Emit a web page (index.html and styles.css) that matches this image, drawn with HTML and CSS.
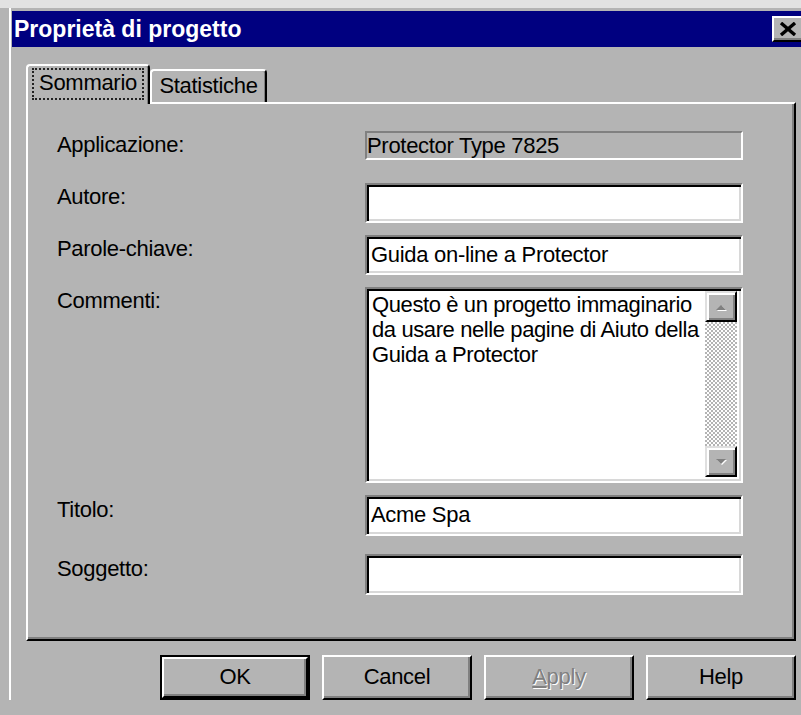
FILE: index.html
```html
<!DOCTYPE html>
<html lang="it">
<head>
<meta charset="utf-8">
<title>Proprietà di progetto</title>
<link rel="stylesheet" href="styles.css">
</head>
<body>
<div class="top-edge"></div>
<div class="window">
  <div class="titlebar">
    <span class="title">Proprietà di progetto</span>
    <div class="close" aria-label="Chiudi">
      <svg width="20" height="14" viewBox="0 0 20 14">
        <path d="M3 1 L17 13 M17 1 L3 13" stroke="#000" stroke-width="3.4" fill="none"/>
      </svg>
    </div>
  </div>

  <div class="content">
    <div class="tabs">
      <div class="tab active"><span class="focus">Sommario</span></div>
      <div class="tab">Statistiche</div>
    </div>

    <div class="panel">
      <div class="row">
        <span class="label">Applicazione:</span>
        <div class="static">Protector Type 7825</div>
      </div>
      <div class="row row-autore">
        <span class="label">Autore:</span>
        <div class="field"></div>
      </div>
      <div class="row row-gap">
        <span class="label">Parole-chiave:</span>
        <div class="field">Guida on-line a Protector</div>
      </div>
      <div class="row row-gap">
        <span class="label">Commenti:</span>
        <div class="field memo">
          <div class="memo-text">Questo è un progetto immaginario<br>da usare nelle pagine di Aiuto della<br>Guida a Protector</div>
          <div class="scrollbar">
            <div class="scroll-btn">
              <svg width="14" height="8" viewBox="0 0 14 8"><path d="M2 7 L7 2 L12 7 Z" fill="#fff" transform="translate(1 1)"/><path d="M2 7 L7 2 L12 7 Z" fill="#808080"/></svg>
            </div>
            <div class="track"></div>
            <div class="scroll-btn">
              <svg width="14" height="8" viewBox="0 0 14 8"><path d="M2 1 L7 6 L12 1 Z" fill="#fff" transform="translate(1 1)"/><path d="M2 1 L7 6 L12 1 Z" fill="#808080"/></svg>
            </div>
          </div>
        </div>
      </div>
      <div class="row row-gap">
        <span class="label label-low">Titolo:</span>
        <div class="field tall">Acme Spa</div>
      </div>
      <div class="row row-soggetto">
        <span class="label label-low">Soggetto:</span>
        <div class="field tall"></div>
      </div>
    </div>

    <div class="buttons">
      <div class="btn default"><span class="btn-face">OK</span></div>
      <div class="btn"><span class="btn-face">Cancel</span></div>
      <div class="btn"><span class="btn-face disabled"><u>A</u>pply</span></div>
      <div class="btn"><span class="btn-face">Help</span></div>
    </div>
  </div>
</div>
</body>
</html>
```

FILE: styles.css
```css
* {
  box-sizing: border-box;
}

body {
  margin: 0;
  width: 801px;
  height: 715px;
  overflow: hidden;
  background: #b4b4b4;
  font-family: "Liberation Sans", Arial, sans-serif;
  font-size: 22px;
  letter-spacing: -0.3px;
  color: #000;
}

/* light strip along the top of the window frame */
.top-edge {
  height: 8px;
  background: #e2e2e2;
}

.window {
  margin-left: 9px;
  border-left: 2px solid #fff;
  padding: 3px 0 0 1px;
  width: 820px;
}

/* caption bar */
.titlebar {
  width: 789px;
  height: 36px;
  background: #000080;
  display: flex;
  align-items: center;
  padding-left: 2px;
}

.title {
  flex: 1;
  color: #fff;
  font-weight: bold;
  font-size: 23px;
  letter-spacing: 0;
  line-height: 36px;
  white-space: nowrap;
}

.close {
  width: 29px;
  height: 26px;
  background: #b4b4b4;
  border-style: solid;
  border-width: 2px 0 2px 2px;
  border-color: #fff #000 #000 #fff;
  box-shadow: inset 0 -2px 0 #808080;
  display: flex;
  align-items: center;
  justify-content: center;
  padding-left: 1px;
}

.content {
  padding: 17px 0 0 14px;
}

/* tab strip */
.tabs {
  display: flex;
  align-items: flex-end;
  height: 40px;
  margin-bottom: -2px;
  position: relative;
  z-index: 1;
}

.tab {
  background: #b4b4b4;
  border-top: 2px solid #fff;
  border-left: 2px solid #fff;
  border-right: 2px solid #000;
  border-radius: 4px 4px 0 0;
  box-shadow: inset -1px 0 0 #808080;
  width: 117px;
  height: 33px;
  margin-bottom: 2px;
  display: flex;
  align-items: center;
  justify-content: center;
  padding-bottom: 1px;
}

.tab.active {
  width: 124px;
  height: 40px;
  margin-bottom: 0;
  padding: 2px 4px 4px 4px;
  align-items: stretch;
}

.focus {
  flex: 1;
  border: 2px dotted #222;
  display: flex;
  align-items: center;
  justify-content: center;
  padding-bottom: 2px;
}

/* property page */
.panel {
  width: 770px;
  height: 539px;
  border-style: solid;
  border-width: 2px;
  border-color: #fff #000 #000 #fff;
  box-shadow: inset -2px -2px 0 #808080;
  padding: 27px 0 0 29px;
}

.row {
  display: grid;
  grid-template-columns: 308px 378px;
  align-items: start;
}

.row-autore {
  margin-top: 23px;
}

.row-gap {
  margin-top: 12px;
}

.row-soggetto {
  margin-top: 18px;
}

.label {
  line-height: 24px;
  padding-top: 2px;
}

.label-low {
  padding-top: 3px;
}

.static {
  height: 29px;
  border-style: solid;
  border-width: 2px;
  border-color: #808080 #fff #fff #808080;
  padding-left: 0;
  line-height: 25px;
  white-space: nowrap;
}

.field {
  height: 40px;
  background: #fff;
  border-style: solid;
  border-width: 2px;
  border-color: #808080 #fff #fff #808080;
  box-shadow: inset 2px 2px 0 #000, inset -2px -2px 0 #d8d8d8;
  padding-left: 4px;
  line-height: 36px;
  white-space: nowrap;
}

.field.tall {
  height: 41px;
}

.memo {
  height: 196px;
  display: flex;
  padding: 2px 4px 4px 4px;
  line-height: 25px;
}

.memo-text {
  flex: 1;
  padding: 1px 0 0 1px;
  letter-spacing: -0.4px;
  white-space: nowrap;
  overflow: hidden;
}

.scrollbar {
  width: 32px;
  display: flex;
  flex-direction: column;
}

.scroll-btn {
  height: 31px;
  background: #b4b4b4;
  border-style: solid;
  border-width: 2px;
  border-color: #dfdfdf #000 #000 #dfdfdf;
  box-shadow: inset 2px 2px 0 #fff, inset -2px -2px 0 #808080;
  display: flex;
  align-items: center;
  justify-content: center;
}

.track {
  flex: 1;
  background: repeating-conic-gradient(#b4b4b4 0 25%, #fff 0 50%) 0 0 / 4px 4px;
}

/* dialog buttons */
.buttons {
  width: 770px;
  margin-top: 14px;
  display: flex;
  justify-content: flex-end;
  gap: 12px;
}

.btn {
  width: 150px;
  height: 45px;
  display: flex;
}

.btn.default {
  border: 2px solid #000;
}

.btn-face {
  flex: 1;
  background: #b4b4b4;
  border-style: solid;
  border-width: 2px;
  border-color: #fff #000 #000 #fff;
  box-shadow: inset -2px -2px 0 #808080;
  display: flex;
  align-items: center;
  justify-content: center;
  padding-bottom: 1px;
}

.btn-face.disabled {
  color: #808080;
  text-shadow: 1px 1px 0 #fff;
}
```
